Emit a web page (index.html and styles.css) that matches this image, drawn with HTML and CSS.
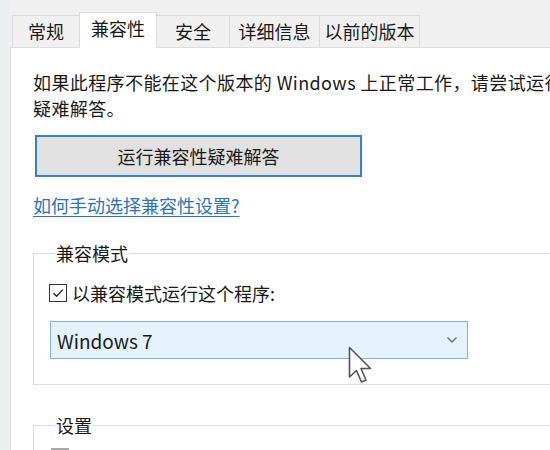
FILE: index.html
```html
<!DOCTYPE html>
<html lang="zh-CN">
<head>
<meta charset="utf-8">
<title>兼容性</title>
<link rel="stylesheet" href="styles.css">
</head>
<body>
<div class="dialog">
  <div class="tabs">
    <div class="tab tab-general">常规</div>
    <div class="tab tab-active">兼容性</div>
    <div class="tab tab-security">安全</div>
    <div class="tab tab-details">详细信息</div>
    <div class="tab tab-prev">以前的版本</div>
  </div>
  <div class="panel">
    <p class="intro">如果此程序不能在这个版本的 Windows 上正常工作，请尝试运行<br>疑难解答。</p>
    <button class="run-btn">运行兼容性疑难解答</button>
    <a class="help-link" href="#">如何手动选择兼容性设置?</a>
    <fieldset class="group group-mode">
      <legend class="group-title">兼容模式</legend>
      <label class="check-row">
        <span class="checkbox checked">
          <svg width="14" height="14" viewBox="0 0 14 14"><path d="M2.5 7.2 L5.6 10.2 L11.8 3.6" fill="none" stroke="#222" stroke-width="1.3"/></svg>
        </span>
        <span class="check-label">以兼容模式运行这个程序:</span>
      </label>
      <div class="select">
        <span class="select-text">Windows 7</span>
        <svg class="chevron" width="12" height="8" viewBox="0 0 12 8"><path d="M1.5 1.5 L6 6 L10.5 1.5" fill="none" stroke="#6d6d6d" stroke-width="1.4"/></svg>
      </div>
    </fieldset>
    <fieldset class="group group-settings">
      <legend class="group-title">设置</legend>
      <div class="check-row">
        <span class="checkbox"></span>
      </div>
    </fieldset>
  </div>
  <svg class="cursor" width="26" height="44" viewBox="0 0 26 44"><path d="M1.5 1.5 L1.5 31 L8.5 24.5 L13.5 36 L18 34 L13 22.5 L22.5 22.5 Z" fill="#fff" stroke="#555" stroke-width="1.6" stroke-linejoin="round"/></svg>
</div>
</body>
</html>
```

FILE: styles.css
```css
html, body {
  margin: 0;
  padding: 0;
}
body {
  width: 550px;
  height: 450px;
  overflow: hidden;
  background: #eceff0;
  font-family: "Noto Sans CJK SC", "Microsoft YaHei", sans-serif;
  color: #1a1a1a;
}
.dialog {
  position: relative;
  height: 450px;
  margin-left: 10px;
  background: #f0f0f0;
  display: flex;
  flex-direction: column;
}
.tabs {
  display: flex;
  align-items: flex-end;
  height: 47px;
  padding-left: 2px;
  flex-shrink: 0;
}
.tab {
  box-sizing: border-box;
  height: 32px;
  border: 1px solid #dcdcdc;
  border-bottom: none;
  border-right: none;
  background: #f0f0f0;
  font-size: 18px;
  line-height: 30px;
  text-align: center;
  color: #1a1a1a;
}
.tab-general { width: 67px; }
.tab-active {
  width: 78px;
  height: 36px;
  margin-bottom: -1px;
  background: #fff;
  border-right: 1px solid #dcdcdc;
  position: relative;
  z-index: 1;
  line-height: 30px;
  padding-bottom: 4px;
}
.tab-security { width: 72px; border-left: none; }
.tab-details { width: 90px; }
.tab-prev { width: 101px; border-right: 1px solid #dcdcdc; }
.panel {
  flex: 1;
  background: #fff;
  border-top: 1px solid #dcdcdc;
  border-left: 1px solid #dcdcdc;
  padding: 21px 0 0 22px;
  overflow: hidden;
  display: flex;
  flex-direction: column;
  align-items: flex-start;
}
.panel > * {
  flex-shrink: 0;
}
.intro {
  margin: 0;
  font-size: 18px;
  letter-spacing: 0.4px;
  line-height: 26px;
  white-space: nowrap;
}
.run-btn {
  margin: 14px 0 0 2px;
  width: 327px;
  height: 42px;
  border: 2px solid #3c7fc6;
  background: #e1e1e1;
  font-family: inherit;
  font-size: 18px;
  color: #1a1a1a;
  padding: 0;
}
.help-link {
  margin-top: 16px;
  font-size: 18px;
  line-height: 24px;
  color: #2f72c0;
  text-decoration: underline;
  text-underline-offset: 3px;
}
.group {
  box-sizing: border-box;
  width: 560px;
  margin: 25px 0 0 0;
  padding: 0 0 0 15px;
  border: 1px solid #dcdcdc;
  border-right: none;
}
.group-title {
  font-size: 18px;
  line-height: 22px;
  padding: 0 1px;
  margin-left: 6px;
  color: #1a1a1a;
}
.group-mode {
  height: 143px;
}
.check-row {
  display: flex;
  align-items: center;
  margin-top: 17px;
  gap: 5px;
}
.checkbox {
  box-sizing: border-box;
  width: 18px;
  height: 18px;
  border: 1px solid #333;
  background: #fff;
  display: flex;
  align-items: center;
  justify-content: center;
}
.check-label {
  font-size: 18px;
  line-height: 24px;
}
.select {
  box-sizing: border-box;
  width: 418px;
  height: 38px;
  margin: 16px 0 0 1px;
  border: 1px solid #7eb4ea;
  background: #e5f1fb;
  display: flex;
  align-items: center;
  justify-content: space-between;
  padding: 0 9px 0 6px;
}
.select-text {
  font-size: 19px;
  color: #1a1a1a;
}
.group-settings {
  height: 120px;
  margin-top: 29px;
}
.group-settings .check-row {
  margin-top: 12px;
  margin-left: 2px;
}
.group-settings .checkbox {
  border-color: #a8a8a8;
  border-top-width: 2px;
}
.cursor {
  position: absolute;
  left: 338px;
  top: 346px;
}
```
